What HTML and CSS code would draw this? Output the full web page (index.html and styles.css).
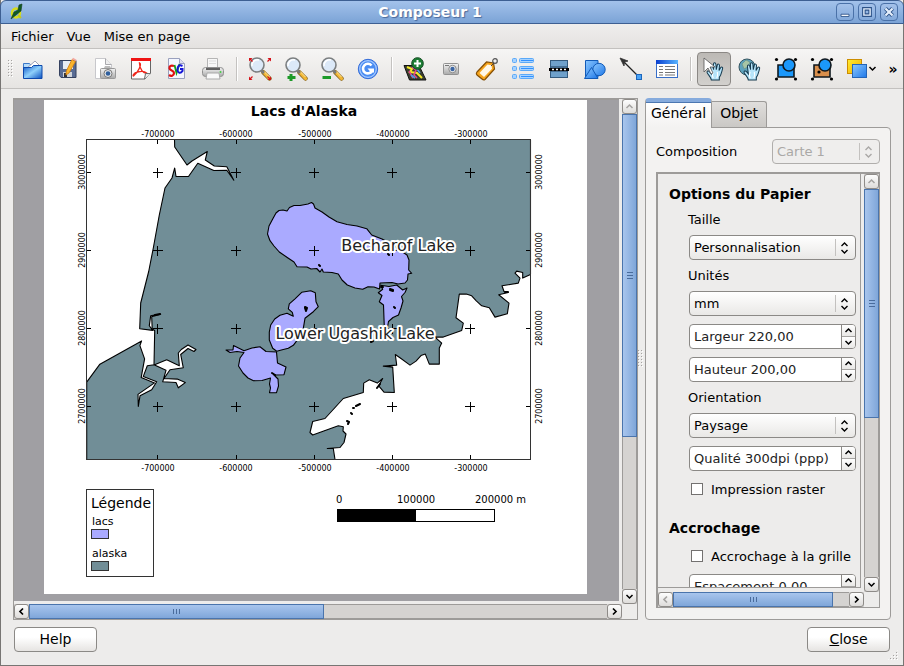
FILE: index.html
```html
<!DOCTYPE html>
<html lang="fr">
<head>
<meta charset="utf-8">
<title>Composeur 1</title>
<link rel="stylesheet" href="styles.css">
</head>
<body>
<svg class="defs" aria-hidden="true">
  <defs>
    <linearGradient id="blue" x1="0" y1="0" x2="1" y2="1"><stop offset="0" stop-color="#8cc8ff"/><stop offset="1" stop-color="#1f78e8"/></linearGradient>
    <linearGradient id="folder" x1="0" y1="0" x2="1" y2="1"><stop offset="0" stop-color="#0a55c8"/><stop offset=".5" stop-color="#8fd0fb"/><stop offset="1" stop-color="#0b50c0"/></linearGradient>
    <linearGradient id="grey" x1="0" y1="0" x2="0" y2="1"><stop offset="0" stop-color="#f4f4f4"/><stop offset="1" stop-color="#a9a9a9"/></linearGradient>
    <linearGradient id="gold" x1="0" y1="0" x2="1" y2="1"><stop offset="0" stop-color="#ffee30"/><stop offset="1" stop-color="#f5a800"/></linearGradient>
    <linearGradient id="head" x1="0" y1="0" x2="1" y2="0"><stop offset="0" stop-color="#0a3fd0"/><stop offset="1" stop-color="#58b4ff"/></linearGradient>
    <symbol id="lens" viewBox="0 0 24 24">
      <path d="M15.500 15.500l6 6" stroke="#8a6a28" stroke-width="4.500" stroke-linecap="round"/>
      <path d="M16 15.500l5.500 6" stroke="#f2b632" stroke-width="3.200" stroke-linecap="round"/>
      <path d="M16.500 15l5 5" stroke="#fce29a" stroke-width="1"/>
      <path d="M13 13l3 3" stroke="#777" stroke-width="2.500"/>
      <circle cx="9" cy="8" r="7" fill="#dce9f8" stroke="#7c7f80" stroke-width="1.600"/>
      <path d="M4 9a5.500 5.500 0 0 1 7-6" fill="none" stroke="#fff" stroke-width="1.500"/>
    </symbol>
    <symbol id="hand" viewBox="0 0 24 24">
      <path d="M8 23c0-3-3-5-4.500-8-.8-2 1.500-2.500 2.700-1l1.800 2.200L7 8c0-2 2-2 2.500-.3l1 4-.2-6c0-2 2.500-2 2.700 0l.4 6 1.100-5c.5-1.800 2.600-1.300 2.400.4l-.5 5.400 1.700-3c1-1.500 2.700-.5 2.200 1-1 3-1.300 6.500-3.600 9.500v3z" fill="#b5e4fa" stroke="#14384c" stroke-width="1.100"/>
      <path d="M10 21c-1-3-1-5 0-7M14 21c1-2 1-5 .5-7" fill="none" stroke="#fff" stroke-width="1.200"/>
    </symbol>
    <symbol id="corners" viewBox="0 0 24 24"><g><circle cx="2.500" cy="2.500" r="1.600"/><circle cx="21.500" cy="2.500" r="1.600"/><circle cx="2.500" cy="22" r="1.600"/><circle cx="21.500" cy="22" r="1.600"/></g></symbol>
    <symbol id="updown" viewBox="0 0 9 12"><path d="M1.500 4l3-3 3 3M1.500 8l3 3 3-3" fill="none" stroke="currentColor" stroke-width="1.400"/></symbol>
    <symbol id="up" viewBox="0 0 9 7"><path d="M1.500 5l3-3 3 3" fill="none" stroke="currentColor" stroke-width="1.500"/></symbol>
    <symbol id="down" viewBox="0 0 9 7"><path d="M1.500 2l3 3 3-3" fill="none" stroke="currentColor" stroke-width="1.500"/></symbol>
    <symbol id="left" viewBox="0 0 7 9"><path d="M5 1.500l-3 3 3 3" fill="none" stroke="currentColor" stroke-width="1.700"/></symbol>
    <symbol id="right" viewBox="0 0 7 9"><path d="M2 1.500l3 3-3 3" fill="none" stroke="currentColor" stroke-width="1.700"/></symbol>
    <pattern id="dots" width="3" height="3" patternUnits="userSpaceOnUse"><rect width="1" height="1" fill="#a5a3a1"/><rect x="1" y="1" width="1" height="1" fill="#fff"/></pattern>
  </defs>
</svg>

<div class="window">
  <header class="titlebar">
    <svg class="app-icon" viewBox="0 0 14 18" aria-hidden="true"><ellipse cx="6" cy="10" rx="4" ry="4.500" fill="none" stroke="#d6dc1c" stroke-width="2.500"/><path d="M8 12l3 3" stroke="#c5c91b" stroke-width="2"/><path d="M1 16L4 9l4-2 1-5 3-1-1 7-5 4z" fill="#0f5a22" stroke="#153c18" stroke-width=".6"/></svg>
    <h1>Composeur 1</h1>
    <div class="window-buttons">
      <button aria-label="Réduire"><svg viewBox="0 0 18 18"><path d="M4.500 11.500h9v2.500h-9z" fill="#fff" stroke="#2c5288"/></svg></button>
      <button aria-label="Agrandir"><svg viewBox="0 0 18 18"><path d="M5.500 5.500h7v7h-7z" fill="none" stroke="#2c5288" stroke-width="4"/><path d="M5.500 5.500h7v7h-7z" fill="none" stroke="#e4eefb" stroke-width="1.600"/></svg></button>
      <button aria-label="Quitter"><svg viewBox="0 0 18 18"><path d="M5 5l8 8M13 5l-8 8" stroke="#2c5288" stroke-width="4.500"/><path d="M5 5l8 8M13 5l-8 8" stroke="#e4eefb" stroke-width="2.500"/></svg></button>
    </div>
  </header>

  <nav class="menubar">
    <a href="#">Fichier</a>
    <a href="#">Vue</a>
    <a href="#">Mise en page</a>
  </nav>

  <div class="toolbar" role="toolbar">
    <svg class="handle" viewBox="0 0 6 18" aria-hidden="true"><rect width="6" height="18" fill="url(#dots)"/></svg>
    <button aria-label="Ouvrir"><svg viewBox="0 0 24 24"><path d="M2.500 21V6.500h6l2 2.500" fill="#b7dcfa" stroke="#3b78c8"/><path d="M5 12l9-8 6 6-2 4z" fill="#fff" stroke="#9a9fb5"/><path d="M2.500 10.500h8l2-2h8.500v13H2.500z" fill="url(#folder)" stroke="#0d48ac"/></svg></button>
    <button aria-label="Enregistrer"><svg viewBox="0 0 24 24"><path d="M2.500 3.500h16.500v17h-15l-1.500-2z" fill="#596c94" stroke="#35415f"/><path d="M6 4h10v8H6z" fill="#e8edf6"/><path d="M6 15h9v5H6z" fill="#cfd3d9"/><path d="M7 16h3v4H7z" fill="#333"/><path d="M15 2.500l3.500 2L12 16l-3 2 .3-4z" fill="#fbb52c" stroke="#d27c10" stroke-width=".8"/><path d="M15.500 1.500l3.500 2" stroke="#f3a6a0" stroke-width="2"/></svg></button>
    <button aria-label="Exporter image"><svg viewBox="0 0 24 24"><path d="M2.500 1.500h10l6 6v14h-16z" fill="#fff" stroke="#c8c8cc"/><path d="M12.500 1.500v6h6" fill="#eee" stroke="#a9a9ad"/><rect x="7.500" y="11.500" width="15" height="10" rx="1" fill="url(#grey)" stroke="#999"/><path d="M11 11l1-2h5l1 2z" fill="#bbb"/><circle cx="15" cy="16.500" r="4" fill="#e7e7e7" stroke="#777"/><circle cx="15" cy="16.500" r="2.300" fill="#2f5f9d"/></svg></button>
    <button aria-label="Exporter PDF"><svg viewBox="0 0 24 24"><path d="M2.500 1.500h19v14.500l-5.500 6H2.500z" fill="#fff" stroke="#666"/><path d="M2 1h20v3H2z" fill="#ef1414"/><path d="M10.500 6c3 1-2 10-6 13-1 0 0-3 4-4s7-1 9 1c-3 1-7-4-7-10z" fill="none" stroke="#f0271c" stroke-width="1.400"/><path d="M15.500 22l1-5.500 5 .2" fill="#eee" stroke="#666"/></svg></button>
    <button aria-label="Exporter SVG"><svg viewBox="0 0 24 24"><path d="M3.500 1.500h11l5 5v15h-16z" fill="#f4f6ff" stroke="#9aa0bd"/><path d="M14.500 1.500v5h5" fill="#dde" stroke="#9aa0bd"/><path d="M9 9c-3-1-5 0-4.500 2.500S9 13 9 16s-3 3.500-5 2" fill="none" stroke="#e01010" stroke-width="2.200"/><path d="M9.500 8l2 8 3-9" fill="none" stroke="#18a018" stroke-width="1.800"/><path d="M17.500 9c-4-2-5 1-5 4s3 4 5 1v-2h-2.500" fill="none" stroke="#1515d8" stroke-width="2"/></svg></button>
    <button aria-label="Imprimer"><svg viewBox="0 0 24 24"><path d="M6.500 11V1.500h10V11" fill="#f8f8f8" stroke="#b5b5b5"/><path d="M8 4h7M8 6.500h7" stroke="#ddd"/><rect x="1.500" y="10.500" width="21" height="9" rx="3" fill="url(#grey)" stroke="#909090"/><path d="M5 12h14" stroke="#333" stroke-width="1.500"/><path d="M6 16h12l1 6H5z" fill="#f9f9f9" stroke="#aaa"/><circle cx="19.500" cy="15" r="1" fill="#4c4"/></svg></button>
    <span class="separator"></span>
    <button aria-label="Zoom total"><svg viewBox="0 0 24 24"><use href="#lens"/><path d="M1 1h3.500L1 4.500zM23 1h-3.500L23 4.500zM1 23h3.500L1 19.500zM23 23h-3.500l3.500-3.500z" fill="#d4121a"/><path d="M2 2l2.500 2.500M22 2l-2.500 2.500M2 22l2.500-2.500M22 22l-2.500-2.500" stroke="#d4121a" stroke-width="1.200"/></svg></button>
    <button aria-label="Zoom avant"><svg viewBox="0 0 24 24"><use href="#lens"/><path d="M7 17v7M3.500 20.500h8" stroke="#1c9a28" stroke-width="3"/></svg></button>
    <button aria-label="Zoom arrière"><svg viewBox="0 0 24 24"><use href="#lens"/><path d="M2.500 20.500h8.500" stroke="#1c9a28" stroke-width="3"/></svg></button>
    <button aria-label="Rafraîchir"><svg viewBox="0 0 24 24"><circle cx="12" cy="12" r="9.700" fill="#4a8cf2" stroke="#356cd8"/><circle cx="12" cy="12" r="8.300" fill="none" stroke="#a8cbff" stroke-width="1.200"/><path d="M15.500 8.500A4.800 4.800 0 1 0 16 14" fill="none" stroke="#fff" stroke-width="2.600"/><path d="M11.500 11.500h6.500v4h-3z" fill="#fff"/></svg></button>
    <span class="separator"></span>
    <button aria-label="Ajouter une carte"><svg viewBox="0 0 24 24"><path d="M1 8.500h15L23 23H6.500z" fill="#3a3f30" stroke="#111"/><path d="M4 10l5 2-2 3 7 1 5 5" fill="none" stroke="#f5ea28" stroke-width="2"/><path d="M9 10l4 3-2 5 3 3M6 14l4 7" fill="none" stroke="#e2468f" stroke-width="1.600"/><path d="M14 12l3 4M8 18l4 3" stroke="#4b9fe0" stroke-width="1.600"/><circle cx="14.500" cy="6.500" r="5.800" fill="#1c7d34" stroke="#114a1f"/><path d="M14.500 3v7M11 6.500h7" stroke="#fff" stroke-width="2"/></svg></button>
    <button aria-label="Ajouter une image"><svg viewBox="0 0 24 24"><rect x="4.500" y="6.500" width="15" height="11" rx="1" fill="url(#grey)" stroke="#929292"/><path d="M6 8.500h4" stroke="#777"/><circle cx="13.500" cy="12" r="3.700" fill="#eee" stroke="#888"/><circle cx="13.500" cy="12" r="2.200" fill="#3b65a3"/></svg></button>
    <button aria-label="Ajouter une étiquette"><svg viewBox="0 0 24 24"><path d="M2 15L11.500 5l7 1 1 6L10 22.500c-1 .8-2 .5-3-.5l-5-4c-.8-1-.8-2 0-3z" fill="#f7a51c" stroke="#854f05" stroke-width="1.200"/><path d="M4.500 16l8-8.500 4 .7.500 3.500L9 20z" fill="#fff8e8"/><circle cx="20" cy="4" r="2.300" fill="none" stroke="#555" stroke-width="1.200"/><path d="M19 6l-3 3" stroke="#444"/></svg></button>
    <button aria-label="Ajouter une légende"><svg viewBox="0 0 24 24"><g fill="#a6d2ff" stroke="#5aa9f8"><rect x="1.500" y="1.500" width="4" height="4" rx="1"/><rect x="1.500" y="9.500" width="4" height="4" rx="1"/><rect x="1.500" y="17.500" width="4" height="4" rx="1"/><rect x="8.500" y="1.500" width="14" height="4" rx="1"/><rect x="8.500" y="9.500" width="14" height="4" rx="1"/><rect x="8.500" y="17.500" width="14" height="4" rx="1"/></g><path d="M10 3.500h12M10 11.500h12M10 19.500h12" stroke="#3191ff"/></svg></button>
    <button aria-label="Ajouter une barre d'échelle"><svg viewBox="0 0 24 24"><rect x="3.500" y="3.500" width="17" height="17" fill="#6fa1cb" stroke="#355b7e"/><path d="M4 9h16v6H4z" fill="#466f94"/><path d="M2 12.500h20" stroke="#000" stroke-width="3"/><path d="M5 12.500h16" stroke="#fff" stroke-width="1.400" stroke-dasharray="2 2"/></svg></button>
    <button aria-label="Ajouter une forme"><svg viewBox="0 0 24 24"><g stroke="#125bb8" fill="url(#blue)"><path d="M2.500 3.500h12.500v17H2.500z"/><circle cx="16" cy="12.500" r="6.200"/><path d="M1.500 21.500l7-11 6.500 11z"/></g></svg></button>
    <button aria-label="Ajouter une flèche"><svg viewBox="0 0 24 24"><path d="M4 4l15 15" stroke="#222" stroke-width="1.300"/><path d="M1 1l8 3-3.500 1L5 9z" fill="#333" stroke="#333" stroke-width=".8"/><rect x="17.500" y="17.500" width="5" height="5" fill="#4aa3f5" stroke="#1c66bd"/></svg></button>
    <button aria-label="Ajouter une table"><svg viewBox="0 0 24 24"><rect x="1.500" y="3.500" width="21" height="17" fill="#fff" stroke="#376ec8"/><path d="M1 3h22v4H1z" fill="url(#head)"/><path d="M4 9.500h4M10 9.500h10M4 12.500h4M10 12.500h10M4 15.500h4M10 15.500h10M4 18h4M10 18h10" stroke="#777"/></svg></button>
    <span class="separator"></span>
    <button class="pressed" aria-label="Sélectionner" aria-pressed="true"><svg viewBox="0 0 24 24"><use href="#hand" x="2" y="2" width="22" height="22"/><path d="M2 1v14l4-4 3 6 2-1-3-6h5z" fill="#fff" stroke="#555" stroke-width=".8"/></svg></button>
    <button aria-label="Déplacer le contenu"><svg viewBox="0 0 24 24"><circle cx="9" cy="10" r="8" fill="#5da2bd" stroke="#37545e"/><path d="M4 7l4-4 4 2-2 5-4 2zM9 13l4-1" fill="#a7c5a5" stroke="#6d9a95"/><use href="#hand" x="3" y="2" width="22" height="22"/></svg></button>
    <button aria-label="Grouper"><svg viewBox="0 0 24 24"><path d="M4 8h16v12H4z" fill="#1b98fb" stroke="#10191f" stroke-width="1.600"/><circle cx="15" cy="8" r="6" fill="#1b98fb" stroke="#10191f" stroke-width="1.600"/><use href="#corners"/></svg></button>
    <button aria-label="Dégrouper"><svg viewBox="0 0 24 24"><path d="M4 8h16v12H4z" fill="#d98f4c" stroke="#10191f" stroke-width="1.600"/><circle cx="15" cy="8" r="6" fill="#1b98fb" stroke="#10191f" stroke-width="1.600"/><circle cx="9" cy="15" r="1.600"/><use href="#corners"/></svg></button>
    <button class="with-arrow" aria-label="Ordre des objets"><svg viewBox="0 0 24 24"><rect x="3.500" y="2.500" width="14" height="14" fill="url(#gold)" stroke="#cc8d00"/><rect x="8.500" y="7.500" width="14" height="13" fill="url(#blue)" stroke="#2465b8"/></svg><svg class="drop" viewBox="0 0 9 7"><use href="#down"/></svg></button>
    <button class="more" aria-label="Plus d'outils">»</button>
  </div>

  <main class="main">
    <section class="composer">
      <div class="view">
        <svg class="paper" viewBox="44 100 543 494" role="img" aria-label="Lacs d'Alaska">
          <rect x="44" y="100" width="543" height="494" fill="#fff"/>
          <text class="map-title" x="304" y="116" text-anchor="middle">Lacs d'Alaska</text>
          <g class="land">
            <path d="M174.500 139.500L174.700 147 187 165l5-4 15.300-9.500-2 8.500 9 6 12.500.7 7 13.500-7-10-13 .3-16-7.300-9.300 13.300H176l-1.300-8.500-2.700 10-7 10-5.700 27-6 33-4.600 23.500-8 31.500-1 25.700 13 1.700-3.400-4.700 1.400-10 5-1 5-.5-9 2.500.5 12 2.500 2-.7 34.300 12.700-5.300 12.600 6-1-12.700 3-3.500 6.700-4.500 8 4.500-2 2-6-3-7.300 6 2.600 13.300-13.300 2-6 8.700 13.300.6 8 3.500-7 5.200-2.300-5.300-13.300-.7 3.300-11.500-12-5.500-6.700 1-4 10.600 13.400 5.400-5 8-11.700 6-1.700 10.600-.3-12 16.500-11.500-13.300-5.500 3.400-18.500-4.700-13.300 1.700-4.700-41.700 23.300-13.200 18V459.500H335l-1.700-11-6 0 12.700-1 4-5 2-8.500-3-3 .3-4.300-5-1-25.600 9.300-2.700-2.500 2.700-11 12.300-3 18.300-20 20-6 .4-9.400 5.600-3.300 8 3.300 5.400-4.600-4 7.300 5.300 6.300 10.300.4-1.600-25.400-9.400-1 13.400-1-1.400-10.600 5.700 4 9 6.600 6-4 5-5.500 4.300-1.500 4 10h10v-16l2.400-5-6.700-6h8.300l18.400-6.600 1.600-7.400-7.300-5.300 3.300-23.700 7 0 5.400 1.700 4.600 5 5.400 5 7.600 2 5.700 9.300 12.300-3.300 1.700-10.700-10.300-8.300 9.600-2.300-4.300-1-2-5.700 8-1.300 8.300-1.400 1.700-5-5-5 1.700-2 6 1.400v5.600l7.800-3.600V139.500z"/>
          </g>
          <g class="lake">
            <path d="M267.500 234L269 226 272.700 219 276 213 279 210.500 283 210 287 211 289.500 207.500 294 205.500 300 205.500 308 204 311.500 202.500 313.500 204 315 208 322 212 329 217 337 221.700 347 224.500 357 226 366.700 228.700 371.700 235 382 239 393 245 401 251 407 255 409 260 408.700 270 411.700 273.300 408 274 407.500 280 405 283 398 284 392 282.500 380 283 379.500 289 374 287 368 286.700 362.700 289.300 355 288 347.300 285 342 280 338.300 274 332 272.500 323.300 272 322 269 320 272 316.700 268.500 311 269 307 267 297 266.700 294 262 288 258 279.300 252 274 246 270 240.700z"/>
            <path d="M380.700 285.300L389 286.500 396.700 285 402.700 290 407 288 405 292.500 401.500 296.500 403 301 401 308 398.500 315 393 317.500 388.500 321.500 387 330 384.500 333 383.500 305 379.300 301.700 382 295.500 378.300 292.700 382.700 289.300z"/>
            <path d="M310.700 290.700l4.600 2 .7 9 2.300 5-5 5-8.300 6.600-1.700 10-4 9-6 8-5 3-6 1.500-5.600 1.500-4-3-3.400-8.300 0-8 1.400-7 4-6 5.300-3.700 7-2 6.300 3-1-4-4-3.500 1-5 5.700-5 6.700-6.500z"/>
            <path d="M276.500 352L266 351.500 260 346.700 252 348 244 350.700 233.500 345.500 233 350 226 350 230 352.500 237 351.500 244 352.500 240 358 238.500 366 243 373 248 378 253.500 380.700 262 380.500 270.500 378 269.500 384 270.500 388 269.500 392.700 276.500 392.700 278.500 386 278 379 274 375 284 374.700 286 367 277.500 363z"/>
            <g class="islet">
              <path d="M319 265l1 1M305 307l2 1-1 3-1-3M394 307l1 1M390 289l3 1 0 1-3-1M381 287l2 0M272 373l3 2M371 342l2-1M388 254l1 1M356 406l4-2M353 408l1 0M347 421l2 1-1 2M351 413l1 1M380 384l-3 4M155 315l5-1M505 292h3"/>
            </g>
          </g>
          <path class="grid" d="M152.500 172.500h10M157.500 167.500v10M231 172.500h10M236 167.500v10M309 172.500h10M314 167.500v10M387 172.500h10M392 167.500v10M465 172.500h10M470 167.500v10
            M152.500 250.500h10M157.500 245.500v10M231 250.500h10M236 245.500v10M309 250.500h10M314 245.500v10M387 250.500h10M392 245.500v10M465 250.500h10M470 245.500v10
            M152.500 328.500h10M157.500 323.500v10M231 328.500h10M236 323.500v10M309 328.500h10M314 323.500v10M387 328.500h10M392 323.500v10M465 328.500h10M470 323.500v10
            M152.500 406.500h10M157.500 401.500v10M231 406.500h10M236 401.500v10M309 406.500h10M314 401.500v10M387 406.500h10M392 401.500v10M465 406.500h10M470 401.500v10
            M157.500 140v4M236 140v4M314 140v4M392 140v4M470 140v4M157.500 459v-4M236 459v-4M314 459v-4M392 459v-4M470 459v-4
            M87 172.500h4M87 250.500h4M87 328.500h4M87 406.500h4M530 172.500h-4M530 250.500h-4M530 328.500h-4M530 406.500h-4"/>
          <rect class="frame" x="86.500" y="139.500" width="444" height="320"/>
          <g class="coords" text-anchor="middle">
            <text x="158" y="137">-700000</text><text x="236" y="137">-600000</text><text x="315" y="137">-500000</text><text x="393" y="137">-400000</text><text x="471" y="137">-300000</text>
            <text x="158" y="471">-700000</text><text x="236" y="471">-600000</text><text x="315" y="471">-500000</text><text x="393" y="471">-400000</text><text x="471" y="471">-300000</text>
            <text transform="translate(85 172) rotate(-90)">3000000</text><text transform="translate(85 250) rotate(-90)">2900000</text><text transform="translate(85 328) rotate(-90)">2800000</text><text transform="translate(85 406) rotate(-90)">2700000</text>
            <text transform="translate(542 172) rotate(-90)">3000000</text><text transform="translate(542 250) rotate(-90)">2900000</text><text transform="translate(542 328) rotate(-90)">2800000</text><text transform="translate(542 406) rotate(-90)">2700000</text>
          </g>
          <g class="lake-name" text-anchor="middle">
            <text x="398" y="251">Becharof Lake</text>
            <text x="355" y="339">Lower Ugashik Lake</text>
          </g>
          <rect class="frame" x="86.500" y="489.500" width="67" height="87"/>
          <text class="legend-title" x="91" y="508">Légende</text>
          <g class="legend-item">
            <text x="92" y="525">lacs</text>
            <rect x="91.500" y="529.500" width="17" height="9" fill="#aaaaff"/>
            <text x="92" y="557">alaska</text>
            <rect x="91.500" y="561.500" width="17" height="9" fill="#718e97"/>
          </g>
          <g class="scale">
            <text x="336" y="503">0</text><text x="397" y="503">100000</text><text x="475" y="503">200000 m</text>
            <rect x="337.500" y="509.500" width="157" height="12" fill="#fff"/>
            <rect x="337.500" y="509.500" width="78" height="12"/>
          </g>
        </svg>
      </div>
      <div class="scroll vertical main-v">
        <button aria-label="Défiler vers le haut" disabled><svg class="v" viewBox="0 0 9 7"><use href="#up"/></svg></button>
        <div class="track"><div class="thumb"></div></div>
        <button aria-label="Défiler vers le bas"><svg class="v" viewBox="0 0 9 7"><use href="#down"/></svg></button>
      </div>
      <div class="scroll horizontal main-h">
        <button aria-label="Défiler vers la gauche"><svg class="h" viewBox="0 0 7 9"><use href="#left"/></svg></button>
        <div class="track"><div class="thumb"></div></div>
        <button aria-label="Défiler vers la droite"><svg class="h" viewBox="0 0 7 9"><use href="#right"/></svg></button>
      </div>
    </section>

    <div class="splitter"><svg viewBox="0 0 6 18" aria-hidden="true"><rect width="6" height="18" fill="url(#dots)"/></svg></div>

    <aside class="side">
      <div class="tabs" role="tablist">
        <button class="tab active" role="tab" aria-selected="true">Général</button>
        <button class="tab" role="tab" aria-selected="false">Objet</button>
      </div>
      <div class="pane">
        <div class="composition">
          <label for="composition">Composition</label>
          <div class="combo disabled"><select id="composition" disabled><option>Carte 1</option></select><svg viewBox="0 0 9 12"><use href="#updown"/></svg></div>
        </div>
        <div class="scrollarea">
          <form class="options">
            <h2>Options du Papier</h2>
            <label for="size">Taille</label>
            <div class="combo"><select id="size"><option>Personnalisation</option></select><svg viewBox="0 0 9 12"><use href="#updown"/></svg></div>
            <label for="units">Unités</label>
            <div class="combo"><select id="units"><option>mm</option></select><svg viewBox="0 0 9 12"><use href="#updown"/></svg></div>
            <div class="spin"><input type="text" aria-label="Largeur" value="Largeur 220,00"><div><button type="button" aria-label="Augmenter"><svg viewBox="0 0 9 7"><use href="#up"/></svg></button><button type="button" aria-label="Diminuer"><svg viewBox="0 0 9 7"><use href="#down"/></svg></button></div></div>
            <div class="spin"><input type="text" aria-label="Hauteur" value="Hauteur 200,00"><div><button type="button" aria-label="Augmenter"><svg viewBox="0 0 9 7"><use href="#up"/></svg></button><button type="button" aria-label="Diminuer"><svg viewBox="0 0 9 7"><use href="#down"/></svg></button></div></div>
            <label for="orientation">Orientation</label>
            <div class="combo"><select id="orientation"><option>Paysage</option></select><svg viewBox="0 0 9 12"><use href="#updown"/></svg></div>
            <div class="spin"><input type="text" aria-label="Qualité" value="Qualité 300dpi (ppp)"><div><button type="button" aria-label="Augmenter"><svg viewBox="0 0 9 7"><use href="#up"/></svg></button><button type="button" aria-label="Diminuer"><svg viewBox="0 0 9 7"><use href="#down"/></svg></button></div></div>
            <label class="check"><input type="checkbox">Impression raster</label>
            <h2 class="next">Accrochage</h2>
            <label class="check"><input type="checkbox">Accrochage à la grille</label>
            <div class="spin"><input type="text" aria-label="Espacement" value="Espacement 0,00"><div><button type="button" aria-label="Augmenter"><svg viewBox="0 0 9 7"><use href="#up"/></svg></button><button type="button" aria-label="Diminuer"><svg viewBox="0 0 9 7"><use href="#down"/></svg></button></div></div>
          </form>
          <div class="scroll vertical side-v">
            <button aria-label="Défiler vers le haut" disabled><svg class="v" viewBox="0 0 9 7"><use href="#up"/></svg></button>
            <div class="track"><div class="thumb"></div></div>
            <button aria-label="Défiler vers le bas"><svg class="v" viewBox="0 0 9 7"><use href="#down"/></svg></button>
          </div>
          <div class="scroll horizontal side-h">
            <button aria-label="Défiler vers la gauche" disabled><svg class="h" viewBox="0 0 7 9"><use href="#left"/></svg></button>
            <div class="track"><div class="thumb"></div></div>
            <button aria-label="Défiler vers la droite"><svg class="h" viewBox="0 0 7 9"><use href="#right"/></svg></button>
          </div>
        </div>
      </div>
    </aside>
  </main>

  <footer class="footer">
    <button class="push">Help</button>
    <button class="push"><u>C</u>lose</button>
    <svg class="grip" viewBox="0 0 12 12" aria-hidden="true"><path d="M12 0v12H0z" fill="url(#dots)"/></svg>
  </footer>
</div>
</body>
</html>
```
FILE: styles.css
```css
* { box-sizing: border-box; }

body {
  margin: 0;
  background: #edeceb;
  color: #000;
  font: 13px/16px "DejaVu Sans", sans-serif;
}

button, input, select { font: inherit; color: inherit; margin: 0; }
button { padding: 0; }
svg { display: block; }
.defs { position: absolute; width: 0; height: 0; }

.window {
  display: flex;
  flex-direction: column;
  min-height: 100vh;
  border: solid #777573;
  border-width: 0 1px 1px;
}

/* Title bar */
.titlebar {
  display: flex;
  align-items: center;
  height: 24px;
  margin: 0 -1px;
  padding: 0 5px 0 9px;
  border: 1px solid #3d5f92;
  border-radius: 6px 6px 0 0;
  background: linear-gradient(#a3c2eb, #7ba3d6);
  color: #fff;
}
.titlebar h1 {
  flex: 1;
  margin: 0;
  font-size: 14px;
  text-align: center;
  text-shadow: 1px 1px 1px #48699a;
}
.app-icon { width: 14px; height: 18px; }
.window-buttons { display: flex; gap: 4px; }
.window-buttons button {
  width: 18px;
  height: 18px;
  border: 1px solid #4a71a8;
  border-radius: 4px;
  background: linear-gradient(#a4c1ea, #83a9da);
}
.window-buttons svg { width: 16px; height: 16px; }

/* Menu and tools */
.menubar {
  display: flex;
  gap: 13px;
  padding: 5px 10px 3px;
  background: linear-gradient(#efeeed, #e4e2e0);
}
.menubar a { color: inherit; text-decoration: none; }
.toolbar {
  display: flex;
  align-items: center;
  gap: 2px;
  padding: 2px 2px 2px 7px;
  height: 41px;
  border: solid #c3c1bf;
  border-width: 1px 0;
  background: linear-gradient(#f6f5f4, #e6e4e2);
}
.toolbar button {
  display: flex;
  align-items: center;
  justify-content: center;
  width: 34px;
  height: 34px;
  flex: none;
  border: 0;
  background: none;
}
.toolbar button svg { width: 24px; height: 24px; flex: none; }
.toolbar .pressed {
  border: 1px solid #8b8885;
  border-radius: 4px;
  background: linear-gradient(#bcb9b5, #d2d0cd);
}
.toolbar .with-arrow { width: 38px; justify-content: flex-start; padding-left: 3px; }
.toolbar button .drop { width: 9px; height: 7px; }
.toolbar .more { width: 16px; margin-left: auto; font-size: 14px; font-weight: bold; }
.handle { width: 6px; height: 18px; flex: none; }
.separator { width: 9px; height: 24px; flex: none; background: linear-gradient(90deg, #c4c2c0 1px, #fff 1px 2px, transparent 2px) 4px 0 no-repeat; }

/* Main area */
.main { display: flex; flex: 1; padding: 9px 12px 0; min-height: 0; }
.composer {
  display: grid;
  flex: 1;
  min-width: 0;
  grid-template: minmax(0, 1fr) 15px / minmax(0, 1fr) 15px;
  border: 1px solid #9d9b99;
}
.view {
  margin: 0 3px 3px 0;
  padding-right: 2px;
  border-top: 1px solid #9d9b99;
  background: #a09fa3;
  overflow: hidden;
}
.paper { width: 543px; margin: 0 auto; }
.main-v { grid-area: 1 / 2; }
.main-h { grid-area: 2 / 1; }

.map-title { font-size: 14px; font-weight: bold; }
.land { fill: #718e97; stroke: #000; stroke-width: 1.1; stroke-linejoin: round; }
.lake { fill: #aaaaff; stroke: #000; stroke-width: 1.1; stroke-linejoin: round; }
.islet { stroke-width: 2; stroke-linecap: round; }
.grid { fill: none; stroke: #000; shape-rendering: crispEdges; }
.frame { fill: none; stroke: #333; }
.coords { font-size: 8px; }
.lake-name { font-size: 16px; fill: #222; stroke: #fff; stroke-width: 4; paint-order: stroke; stroke-linejoin: round; }
.legend-title { font-size: 14px; }
.legend-item { font-size: 11px; }
.legend-item rect { stroke: #333; }
.scale { font-size: 10px; }
.scale rect { stroke: #000; }

/* Scroll bars */
.scroll { display: flex; background: #d5d3d1; }
.scroll.vertical { flex-direction: column; }
.scroll button {
  display: flex;
  align-items: center;
  justify-content: center;
  width: 15px;
  height: 15px;
  flex: none;
  border: 1px solid #8e8b88;
  border-radius: 3px;
  background: linear-gradient(#fdfdfd, #dedcda);
}
.scroll button:disabled { color: #a5a3a1; }
.scroll .v { width: 9px; height: 7px; }
.scroll .h { width: 7px; height: 9px; }
.track { flex: 1; display: flex; border: solid #9d9b99; border-width: 1px 0; }
.vertical .track { border-width: 0 1px; }
.thumb { border: 1px solid #4a74ac; }
.vertical .thumb {
  width: 15px;
  margin: 0 -1px;
  background:
    repeating-linear-gradient(#4a6c9c 0 1px, transparent 1px 3px) center / 6px 7px no-repeat,
    linear-gradient(90deg, #a8c5ed, #7fa6d9);
}
.horizontal .thumb {
  height: 15px;
  margin: -1px 0;
  background:
    repeating-linear-gradient(90deg, #4a6c9c 0 1px, transparent 1px 3px) center / 7px 5px no-repeat,
    linear-gradient(#a8c5ed, #7fa6d9);
}
.main-v .thumb { height: 68%; }
.main-h .thumb { width: 51%; }
.side-v .thumb { height: 59%; }
.side-h .thumb { width: 91%; }

.splitter { display: flex; align-items: center; width: 7px; }
.splitter svg { width: 6px; height: 18px; }

/* Side panel */
.side { display: flex; flex-direction: column; width: 246px; flex: none; }
.tabs { display: flex; align-items: flex-end; }
.tab {
  height: 26px;
  padding: 0 8px 3px;
  border: 1px solid #9d9b99;
  border-left: 0;
  border-bottom: 0;
  border-radius: 0 3px 0 0;
  background: linear-gradient(#e0dedc, #cac8c5);
  font-size: 14px;
}
.tab.active {
  position: relative;
  height: 30px;
  padding: 0 5px 5px;
  margin-bottom: -1px;
  border-left: 1px solid #9d9b99;
  border-top: 4px solid #86abdd;
  border-radius: 4px 4px 0 0;
  background: linear-gradient(#fff, #f3f2f1);
  box-shadow: inset 0 1px 0 #4c77b1;
}
.pane {
  display: flex;
  flex: 1;
  flex-direction: column;
  min-height: 0;
  padding: 11px 10px;
  border: 1px solid #9d9b99;
  border-radius: 0 4px 4px 4px;
  background: #f3f2f1;
}
.composition { display: flex; align-items: center; justify-content: space-between; margin-bottom: 8px; }
.composition .combo { width: 108px; }
.scrollarea {
  display: grid;
  flex: 1;
  min-height: 0;
  grid-template: minmax(0, 1fr) 15px / minmax(0, 1fr) 15px;
  border: 1px solid #9d9b99;
  border-width: 2px 1px 1px 2px;
  background: #edeceb;
}
.options {
  display: flex;
  flex-direction: column;
  gap: 8px;
  height: 0;
  min-height: calc(100% - 4px);
  overflow: hidden;
  margin: 0 3px 0 0;
  padding: 11px 4px 0 31px;
  border: solid #9d9b99;
  border-width: 0 1px 1px 0;
}
.options > * { flex: none; }
.side-v { grid-area: 1 / 2; }
.side-h { grid-area: 2 / 1; }
.options h2 { margin: 0 0 0 -20px; font-size: 14px; line-height: 19px; }
.options .next { margin-top: 12px; }
.options label { margin-left: -1px; line-height: 15px; }
.options .check { display: flex; align-items: center; height: 20px; gap: 8px; margin-left: 2px; white-space: nowrap; }
.check input {
  width: 12px;
  height: 12px;
  appearance: none;
  border: 1px solid #737170;
  background: #fff;
}

.combo, .spin {
  position: relative;
  display: flex;
  height: 25px;
  border: 1px solid #8b8986;
  border-radius: 4px;
  background: linear-gradient(#fff, #e9e8e6);
}
.combo select {
  flex: 1;
  min-width: 0;
  padding: 0 4px;
  border: 0;
  background: none;
  appearance: none;
}
.combo svg {
  position: absolute;
  right: 6px;
  top: 6px;
  width: 9px;
  height: 12px;
  pointer-events: none;
}
.combo::after {
  content: "";
  position: absolute;
  right: 19px;
  top: 3px;
  bottom: 3px;
  width: 1px;
  background: #c3c1bf;
}
.combo.disabled { border-color: #b0aeac; background: #efeeed; color: #aaa8a6; }
.combo.disabled select { opacity: 1; }
.spin { background: #fff; overflow: hidden; }
.spin input { flex: 1; min-width: 0; padding: 0 4px; border: 0; background: none; color: #222; }
.spin div { display: flex; flex-direction: column; width: 14px; border-left: 1px solid #8b8986; }
.spin button {
  display: flex;
  flex: 1;
  align-items: center;
  justify-content: center;
  border: 0;
  background: linear-gradient(#fff, #e9e8e6);
}
.spin button + button { border-top: 1px solid #a5a3a1; }
.spin svg { width: 9px; height: 7px; }

/* Dialog buttons */
.footer { position: relative; display: flex; justify-content: space-between; padding: 7px 13px 13px; }
.push {
  width: 83px;
  height: 25px;
  padding-bottom: 2px;
  border: 1px solid #8b8986;
  border-radius: 4px;
  background: linear-gradient(#fff 40%, #e6e4e2);
  font-size: 14px;
}
.grip { position: absolute; right: 4px; bottom: 4px; width: 12px; height: 12px; }
```
